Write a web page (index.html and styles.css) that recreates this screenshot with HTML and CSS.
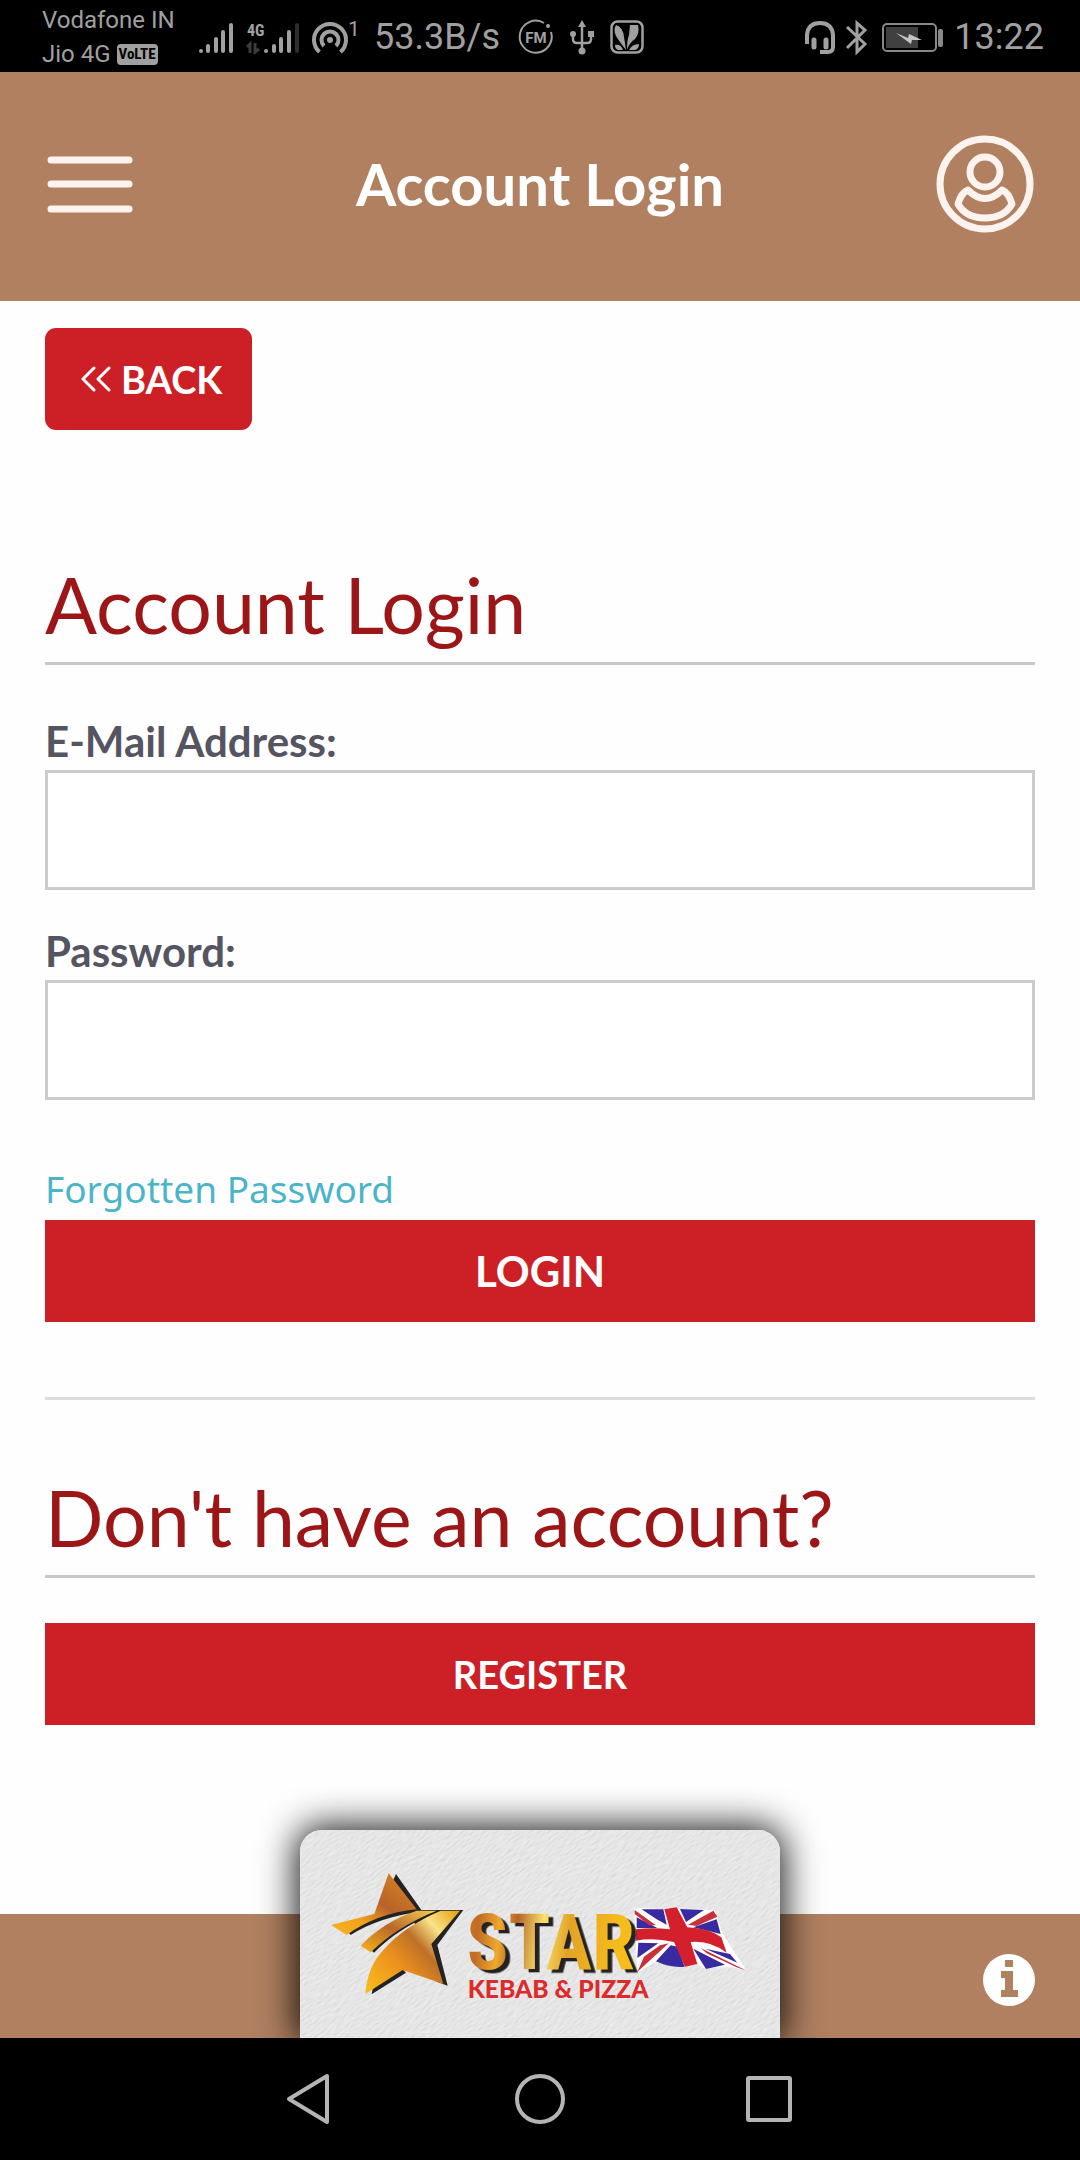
FILE: index.html
```
<!DOCTYPE html>
<html lang="en">
<head>
    <meta charset="UTF-8">
    <meta name="viewport" content="width=device-width, initial-scale=1.0">
    <title>Account Login</title>
    <link rel="stylesheet" href="styles.css">
</head>
<body>
    <div class="status-bar">
        <div class="carriers">
            <div>Vodafone IN</div>
            <div class="carrier">Jio 4G <span class="volte">VoLTE</span></div>
        </div>
        <div class="status-icons">
            <svg width="36" height="36" viewBox="0 0 36 36" stroke="#a0a0a0" stroke-width="4" stroke-linecap="round">
                <path d="M3 32v.1M10 27v5M18 20v12M25 13v19M33 6v26"/>
            </svg>
            <svg class="signal-4g" width="54" height="36" viewBox="0 0 54 36">
                <text x="1" y="17" class="net-label">4G</text>
                <path d="M4 34V25l-3 3M9 24v9l4-3" fill="none" stroke="#3c3c3c" stroke-width="3"/>
                <path d="M20 32v.1M28 27v5M35 20v12M43 13v19" stroke="#a0a0a0" stroke-width="4" stroke-linecap="round"/>
                <path d="M51 6v26" stroke="#2d2d2d" stroke-width="4" stroke-linecap="round"/>
            </svg>
            <svg class="hotspot" width="48" height="36" viewBox="0 0 48 36" fill="none" stroke="#a0a0a0" stroke-width="4">
                <path d="M7.500 33A16 16 0 1 1 28.500 33M12 27A8.500 8.500 0 1 1 24 27"/>
                <circle cx="18" cy="21" r="3" fill="#a0a0a0" stroke="none"/>
                <text x="36" y="17" class="net-count">1</text>
            </svg>
            <span class="speed">53.3B/s</span>
            <svg class="fm" width="36" height="36" viewBox="0 0 36 36">
                <path d="M26 4A16 16 0 1 0 33 13" fill="none" stroke="#a0a0a0" stroke-width="2"/>
                <circle cx="30" cy="7" r="2" fill="#a0a0a0"/>
                <text x="18" y="24" text-anchor="middle" class="fm-label">FM</text>
            </svg>
            <svg class="usb" width="24" height="36" viewBox="0 0 24 36" fill="none" stroke="#a0a0a0" stroke-width="2.500">
                <path d="M12 6v26M3 15v5q0 4 4 4h10q4 0 4-4v-5"/>
                <path d="M12 1l4 7H8zM18 12h6v6h-6z" fill="#a0a0a0" stroke="none"/>
                <circle cx="3" cy="15" r="3" fill="#a0a0a0" stroke="none"/>
                <circle cx="12" cy="32" r="3.500" fill="#a0a0a0" stroke="none"/>
            </svg>
            <svg class="leaf" width="34" height="36" viewBox="0 0 34 36">
                <rect x="1.500" y="2.500" width="31" height="31" rx="6" fill="none" stroke="#a0a0a0" stroke-width="2.500"/>
                <path d="M6 6Q13 8 14 18L16 31Q9 22 6 17Q3 11 6 6zM20 6h8q2 8-3 14-6 4-8 11 0-10 2-15zM5 26q6-1 8 5H8q-3-1-3-5zM29 25q-7 0-10 6h6q4-1 4-6z" fill="#a0a0a0"/>
            </svg>
        </div>
        <div class="status-right">
            <svg width="32" height="36" viewBox="0 0 32 36" fill="none" stroke="#a0a0a0" stroke-width="4">
                <path d="M3 25V16Q4 4 16 4T29 16V28Q29 33 24 33H16"/>
                <path d="M10 21v7M22 21v7" stroke-width="5" stroke-linecap="round"/>
            </svg>
            <svg width="22" height="36" viewBox="0 0 22 36" fill="none" stroke="#a0a0a0" stroke-width="3">
                <path d="M1 8l18 17-8 8V4l8 7L1 29"/>
            </svg>
            <svg class="battery" width="62" height="36" viewBox="0 0 62 36">
                <rect x="1" y="5" width="53" height="27" rx="4" fill="none" stroke="#888" stroke-width="2"/>
                <rect x="4" y="8" width="32" height="21" fill="#404040"/>
                <path d="M14 14l12 5 1-4 13 6H30l-1 4z" fill="#c4c4c4"/>
                <rect x="56" y="10" width="5" height="18" rx="2" fill="#888"/>
            </svg>
            <span class="clock">13:22</span>
        </div>
    </div>

    <header class="header">
        <button type="button" class="icon-button" aria-label="Menu">
            <svg width="90" height="98" viewBox="0 0 90 98" stroke="#fdf3ee" stroke-width="7" stroke-linecap="round">
                <path d="M6 25h78M6 49h78M6 74h78"/>
            </svg>
        </button>
        <div class="header-title">Account Login</div>
        <a href="#" class="icon-button" aria-label="My account">
            <svg width="100" height="100" viewBox="0 0 100 100" fill="none" stroke="#fdf3ee" stroke-width="7" stroke-linejoin="round">
                <circle cx="50" cy="50" r="45"/>
                <circle cx="50" cy="38" r="15"/>
                <path d="M33 56Q50 73 67 56Q74 59 77 70Q69 84 50 84Q31 84 23 70Q26 59 33 56z"/>
            </svg>
        </a>
    </header>

    <main class="content">
        <a href="#" class="back-button">
            <svg width="30" height="26" viewBox="0 0 30 26" fill="none" stroke="white" stroke-width="3" stroke-linecap="round" stroke-linejoin="round">
                <path d="M13 2L2 13l11 11M28 2L17 13l11 11"/>
            </svg>
            BACK
        </a>

        <h1 class="title">Account Login</h1>
        <form class="login-form">
            <div class="form-group">
                <label for="email">E-Mail Address:</label>
                <input type="email" id="email" name="email">
            </div>
            <div class="form-group">
                <label for="password">Password:</label>
                <input type="password" id="password" name="password">
            </div>
            <a href="#" class="forgot">Forgotten Password</a>
            <button type="submit" class="button">LOGIN</button>
        </form>

        <hr class="divider">

        <h2 class="title">Don't have an account?</h2>
        <button type="button" class="button register">REGISTER</button>
    </main>

    <footer class="footer">
        <a href="#" class="logo-card" aria-label="Star Kebab &amp; Pizza">
            <svg class="logo" viewBox="60 90 1440 624">
                <defs>
                    <linearGradient id="goldTop" x1="0" y1="1" x2="1" y2="0">
                        <stop offset="0" stop-color="#f9b41c"/>
                        <stop offset="0.300" stop-color="#f0a01e"/>
                        <stop offset="0.550" stop-color="#b8622a"/>
                        <stop offset="1" stop-color="#dd8a1e"/>
                    </linearGradient>
                    <linearGradient id="goldBar" x1="0" y1="1" x2="1" y2="0">
                        <stop offset="0" stop-color="#f9b41c"/>
                        <stop offset="0.500" stop-color="#b8682a"/>
                        <stop offset="1" stop-color="#f5cf4e"/>
                    </linearGradient>
                    <linearGradient id="goldLow" gradientUnits="userSpaceOnUse" x1="260" y1="560" x2="520" y2="330">
                        <stop offset="0" stop-color="#f8b91b"/>
                        <stop offset="0.350" stop-color="#ea8f1e"/>
                        <stop offset="0.580" stop-color="#bd7027"/>
                        <stop offset="0.780" stop-color="#fae38a"/>
                        <stop offset="1" stop-color="#e6a91c"/>
                    </linearGradient>
                    <linearGradient id="goldText" gradientUnits="userSpaceOnUse" x1="565" y1="0" x2="1060" y2="60">
                        <stop offset="0" stop-color="#d88024"/>
                        <stop offset="0.150" stop-color="#c06c26"/>
                        <stop offset="0.280" stop-color="#efa92d"/>
                        <stop offset="0.380" stop-color="#b5652a"/>
                        <stop offset="0.540" stop-color="#fae16c"/>
                        <stop offset="0.700" stop-color="#e2a326"/>
                        <stop offset="1" stop-color="#f6bc1c"/>
                    </linearGradient>
                    <filter id="plaster" x="0" y="0" width="1" height="1">
                        <feTurbulence type="fractalNoise" baseFrequency="0.040 0.160" numOctaves="3" seed="4" result="noise"/>
                        <feDiffuseLighting in="noise" surfaceScale="2" diffuseConstant="1.150" lighting-color="#eaeaea">
                            <feDistantLight azimuth="90" elevation="58"/>
                        </feDiffuseLighting>
                    </filter>
                </defs>
                <rect x="60" y="90" width="1440" height="624" fill="#e4e4e4"/>
                <rect x="-300" y="-500" width="2200" height="1800" transform="rotate(-38 780 400)" filter="url(#plaster)" opacity="0.550"/>

                <!-- star -->
                <g fill="#242321">
                    <path d="M348 222L424 330H550L472 435L503 557L470 545L440 430L380 330L335 250z"/>
                    <path d="M212 405Q300 350 430 334L380 326Q280 350 200 390z"/>
                    <path d="M282 458Q360 380 478 334L440 332Q340 370 262 440z"/>
                    <path d="M275 583L280 555L368 508L378 518z"/>
                </g>
                <path d="M326 220L410 328Q290 340 200 405L153 375L283 342z" fill="url(#goldTop)"/>
                <path d="M242 437Q310 365 410 332H470Q350 380 272 457z" fill="url(#goldBar)"/>
                <path d="M482 332H540L454 432L490 552L368 510L256 582Q262 500 310 450Q370 380 482 332z" fill="url(#goldLow)"/>

                <!-- union flag -->
                <path d="M1062 326Q1110 322 1160 330Q1235 322 1305 332L1328 402L1400 512Q1340 492 1278 508L1250 490Q1190 510 1130 482L1072 518z" fill="#fff"/>
                <path d="M1085 328L1150 328L1160 374L1130 358zM1200 327L1272 330L1218 366zM1070 352L1132 384H1070zM1240 382L1310 358L1322 402zM1075 428L1135 430L1072 474zM1128 484L1172 436L1192 440L1214 500Q1170 504 1128 484zM1240 446L1335 494L1278 507zM1276 446L1350 462L1372 488z" fill="#382aa0"/>
                <path d="M1153 328L1190 322L1222 382Q1290 385 1324 412L1340 458Q1290 420 1232 426L1252 492L1215 500L1182 426Q1120 412 1068 422V388Q1120 382 1170 388z" fill="#d4202d"/>
                <path d="M1064 330L1128 376H1108L1064 342zM1224 374L1300 332L1312 350L1250 378zM1166 430L1084 505L1072 516L1092 470L1140 436zM1262 444L1400 512L1370 502L1280 460z" fill="#c8303a"/>

                <text x="560" y="506" class="logo-name" fill="url(#goldText)">STAR</text>
                <text x="563" y="593" class="logo-tag">KEBAB &amp; PIZZA</text>
            </svg>
        </a>
        <a href="#" class="info" aria-label="Information">
            <svg width="52" height="52" viewBox="0 0 52 52">
                <circle cx="26" cy="26" r="26" fill="white"/>
                <path d="M22 6h8v7h-8zM18 17h12v19h5v7H18v-7h4V24h-4z" fill="#b08060"/>
            </svg>
        </a>
    </footer>

    <nav class="nav-bar">
        <button type="button" aria-label="Back">
            <svg width="56" height="56" viewBox="0 0 56 56"><path d="M44 5L6 28L44 51z"/></svg>
        </button>
        <button type="button" aria-label="Home">
            <svg width="56" height="56" viewBox="0 0 56 56"><circle cx="28" cy="28" r="23"/></svg>
        </button>
        <button type="button" aria-label="Recent apps">
            <svg width="56" height="56" viewBox="0 0 56 56"><rect x="7" y="7" width="42" height="42" rx="1"/></svg>
        </button>
    </nav>
</body>
</html>
```
FILE: styles.css
```
* {
    margin: 0;
    padding: 0;
    box-sizing: border-box;
}

body {
    font-family: Lato, sans-serif;
    background-color: #fefefe;
    min-height: 100vh;
    display: flex;
    flex-direction: column;
}

svg {
    display: block;
    flex-shrink: 0;
}

a {
    text-decoration: none;
}

button {
    font-family: inherit;
    border: none;
    cursor: pointer;
}

/* status bar */
.status-bar {
    background-color: #000;
    color: #a0a0a0;
    height: 72px;
    padding: 2px 36px 0 42px;
    display: flex;
    align-items: center;
    font-family: Roboto, sans-serif;
}

.carriers {
    font-size: 24px;
    line-height: 34px;
    width: 156px;
    white-space: nowrap;
}

.carrier {
    display: flex;
    align-items: center;
    gap: 6px;
}

.volte {
    background-color: #a0a0a0;
    color: #000;
    border-radius: 4px;
    padding: 0 2px;
    font-family: "Roboto Condensed", Roboto, sans-serif;
    font-size: 15px;
    font-weight: bold;
    line-height: 21px;
}

.status-icons,
.status-right {
    display: flex;
    align-items: center;
}

.status-bar svg {
    overflow: visible;
}

.signal-4g,
.hotspot {
    margin-left: 12px;
}

.net-label {
    font-family: "Roboto Condensed", Roboto, sans-serif;
    font-size: 16px;
    font-weight: bold;
    fill: #a0a0a0;
}

.net-count {
    font-size: 21px;
    fill: #a0a0a0;
    stroke: none;
}

.fm-label {
    font-size: 15px;
    font-weight: bold;
    fill: #a0a0a0;
}

.speed,
.clock {
    font-size: 36px;
    line-height: 42px;
}

.speed {
    margin-left: 14px;
}

.fm {
    margin-left: 18px;
}

.usb,
.leaf {
    margin-left: 16px;
}

.status-right {
    margin-left: auto;
    gap: 10px;
}

.battery {
    margin-left: 4px;
}

/* header */
.header {
    background-color: #b08060;
    height: 229px;
    padding: 0 45px 6px;
    display: grid;
    grid-template-columns: 1fr auto 1fr;
    align-items: center;
}

.header-title {
    color: white;
    font-size: 58px;
    font-weight: bold;
}

.icon-button {
    background: none;
}

.header .icon-button:first-child {
    justify-self: start;
}

.header .icon-button:last-child {
    justify-self: end;
}

/* content */
.content {
    flex: 1;
    padding: 27px 45px 189px;
}

.back-button {
    display: inline-flex;
    align-items: center;
    gap: 10px;
    height: 102px;
    padding: 0 30px 0 36px;
    border-radius: 11px;
    background-color: #cc2026;
    color: white;
    font-size: 38px;
    font-weight: bold;
    vertical-align: top;
}

.title {
    color: #9c1517;
    font-size: 77px;
    font-weight: normal;
    line-height: 94px;
    padding-bottom: 11px;
    border-bottom: 3px solid #c9c9c9;
}

h1.title {
    margin-top: 127px;
    margin-bottom: 50px;
}

h2.title {
    margin-bottom: 45px;
}

.form-group {
    margin-bottom: 35px;
}

.form-group label {
    display: block;
    color: #555461;
    font-size: 42px;
    font-weight: bold;
    line-height: 52px;
    margin-bottom: 3px;
}

.form-group input {
    display: block;
    width: 100%;
    height: 120px;
    padding: 0 20px;
    border: 3px solid #cccccc;
    background-color: white;
    font-family: inherit;
    font-size: 42px;
}

.forgot {
    display: block;
    color: #4bb5c8;
    font-family: "Noto Sans", sans-serif;
    font-size: 37px;
    line-height: 48px;
    margin-top: 65px;
    margin-bottom: 7px;
}

.button {
    display: block;
    width: 100%;
    height: 102px;
    background-color: #cc2026;
    color: white;
    font-size: 42px;
    font-weight: bold;
}

.register {
    font-size: 38px;
}

.divider {
    border: none;
    border-top: 3px solid #dcdcdc;
    margin: 75px 0 70px;
}

/* footer with the logo card over its top edge */
.footer {
    position: relative;
    background-color: #b08060;
    height: 124px;
    padding: 0 45px;
    display: flex;
    align-items: center;
    justify-content: flex-end;
}

.logo-card {
    position: absolute;
    left: 50%;
    bottom: 0;
    width: 480px;
    margin-left: -240px;
    border-radius: 22px 22px 0 0;
    box-shadow: 0 0 36px 4px rgba(0, 0, 0, 0.9);
    overflow: hidden;
}

.logo {
    width: 100%;
    height: auto;
}

.logo-name {
    font-family: "Liberation Sans Narrow", "Roboto Condensed", Roboto, sans-serif;
    font-size: 232px;
    font-weight: bold;
    filter: drop-shadow(14px 10px 0 #242321);
}

.logo-tag {
    font-family: Lato, sans-serif;
    font-size: 74px;
    font-weight: 900;
    fill: #dc2b2b;
}

.info {
    margin-top: 8px;
}

/* android buttons */
.nav-bar {
    position: relative;
    background-color: #000;
    height: 122px;
    display: flex;
    align-items: center;
    justify-content: center;
    gap: 173px;
}

.nav-bar button {
    background: none;
}

.nav-bar svg {
    fill: none;
    stroke: #b4b4b4;
    stroke-width: 4px;
    stroke-linejoin: round;
}
```
